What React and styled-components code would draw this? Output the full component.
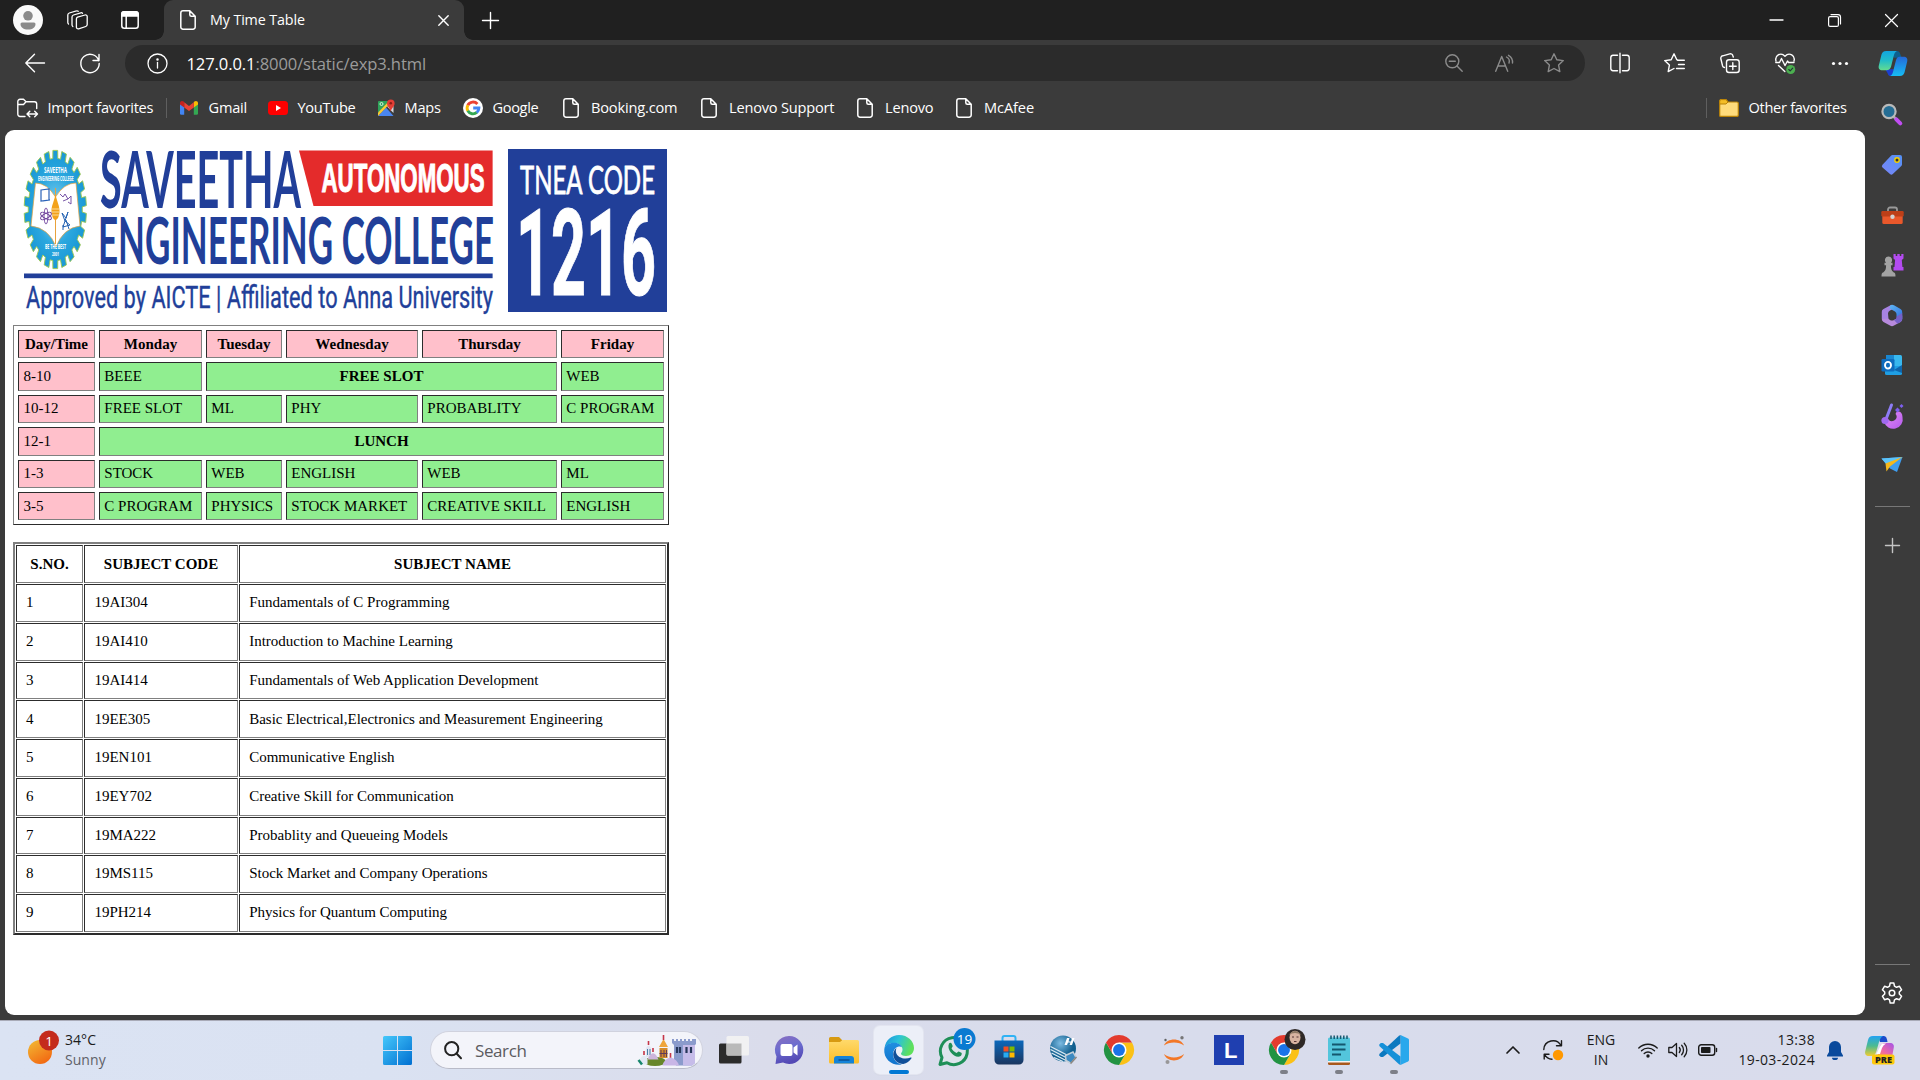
import React from "react";
import styled, { createGlobalStyle, css } from "styled-components";

const UI = `"Open Sans", "Noto Sans", sans-serif`;
const SERIF = `"Liberation Serif", "Times New Roman", serif`;

const GlobalStyle = createGlobalStyle`
  * { box-sizing: border-box; }
  html, body { margin: 0; padding: 0; overflow: hidden; }
`;

/* ---------- shell ---------- */
const Desktop = styled.div`
  width: 1920px;
  height: 1080px;
  display: flex;
  flex-direction: column;
  background: #3b3b3b;
  font-family: ${UI};
  color: #fff;
  overflow: hidden;
`;
const Slot = styled.div`
  flex: none;
  width: ${(p) => p.$w}px;
  height: ${(p) => (p.$h ? `${p.$h}px` : "100%")};
  margin-left: ${(p) => p.$ml || 0}px;
  display: flex;
  align-items: center;
  justify-content: center;
`;
const Svg = styled.svg`
  display: block;
  flex: none;
  overflow: visible;
`;
const Icon = ({ w = 20, h = 20, vb, children, c = "#fff", sw = 1.3 }) => (
  <Svg width={w} height={h} viewBox={vb || `0 0 ${w} ${h}`} fill="none" stroke={c} strokeWidth={sw} strokeLinecap="round" strokeLinejoin="round">
    {children}
  </Svg>
);
const Spacer = styled.div`
  flex: 1;
`;

/* ---------- tab strip ---------- */
const TabStrip = styled.div`
  height: 40px;
  flex: none;
  display: flex;
  background: #202020;
`;
const Tab = styled.div`
  position: relative;
  width: 300px;
  height: 40px;
  display: flex;
  align-items: center;
  padding-left: 16px;
  background: #3b3b3b;
  border-radius: 9px 9px 0 0;
  &::before,
  &::after {
    content: "";
    position: absolute;
    bottom: 0;
    width: 9px;
    height: 9px;
  }
  &::before {
    left: -9px;
    background: radial-gradient(circle at 0 0, transparent 8.5px, #3b3b3b 9px);
  }
  &::after {
    right: -9px;
    background: radial-gradient(circle at 100% 0, transparent 8.5px, #3b3b3b 9px);
  }
`;
const TabTitle = styled.div`
  width: 230px;
  padding-left: 14px;
  font-size: 14.3px;
  line-height: 20px;
  letter-spacing: -0.12px;
  white-space: nowrap;
`;

/* ---------- toolbar ---------- */
const Toolbar = styled.div`
  height: 46px;
  flex: none;
  display: flex;
  align-items: center;
  padding-left: 7px;
`;
const AddressBar = styled.div`
  width: 1460px;
  height: 36px;
  margin-left: 8px;
  padding: 0 6px 0 22px;
  display: flex;
  align-items: center;
  background: #2b2b2b;
  border-radius: 18px;
`;
const Url = styled.div`
  flex: 1;
  padding: 2px 0 0 18.5px;
  font-size: 16.6px;
  letter-spacing: -0.12px;
  line-height: 24px;
  color: #9b9b9b;
  white-space: nowrap;
  b {
    font-weight: 400;
    color: #fff;
  }
`;

/* ---------- favourites ---------- */
const Main = styled.div`
  flex: 1;
  display: flex;
  min-height: 0;
`;
const Left = styled.div`
  width: 1865px;
  display: flex;
  flex-direction: column;
`;
const FavBar = styled.div`
  height: 44px;
  flex: none;
  display: flex;
  align-items: center;
  padding-left: 17px;
`;
const Fav = styled.div`
  display: flex;
  align-items: center;
  width: ${(p) => p.$w}px;
`;
const FavLabel = styled.span`
  padding-left: ${(p) => p.$pl || 9.5}px;
  padding-bottom: 2px;
  font-size: 14.6px;
  line-height: 20px;
  letter-spacing: ${(p) => p.$ls || -0.22}px;
  white-space: nowrap;
`;
const VLine = styled.div`
  width: 1px;
  height: 20px;
  background: #5f5f5f;
`;

/* ---------- page ---------- */
const Page = styled.div`
  margin-left: 5px;
  height: 885px;
  padding: 10px 0 0 8px;
  background: #fff;
  border-radius: 9px;
  color: #000;
  font-family: ${SERIF};
  font-size: 15px;
`;
const bevel = (w) => css`
  border: ${w}px solid;
  border-color: #808080 #2c2c2c #2c2c2c #808080;
`;
const inset = css`
  border: 1px solid;
  border-color: #2c2c2c #808080 #808080 #2c2c2c;
`;
const Timetable = styled.table`
  ${bevel(1)}
  width: 656px;
  margin-top: 2px;
  padding: 4px;
  display: grid;
  grid-template-columns: 77px 103px 76px 132px 135px 103px;
  grid-template-rows: 28px 29px 28px 29px 28px 28px;
  gap: 4px;
`;
const Subjects = styled.table`
  ${bevel(2)}
  width: 656px;
  margin-top: 17px;
  padding: 1px;
  display: grid;
  grid-template-columns: 67px 154px 427px;
  grid-template-rows: 38px 38px 38px 37px 38px 38px 38px 37px 38px 38px;
  gap: 1px;
`;
const Contents = styled.tbody`
  display: contents;
`;
const Row = styled.tr`
  display: contents;
`;
const Cell = styled.td`
  ${inset}
  grid-column: span ${(p) => p.$span || 1};
  display: flex;
  align-items: center;
  justify-content: ${(p) => (p.$head ? "center" : "flex-start")};
  padding: ${(p) => (p.$low ? "1px" : "0")} ${(p) => p.$pad}px ${(p) => (p.$low ? "0" : "1px")};
  font-weight: ${(p) => (p.$head ? 700 : 400)};
  background: ${(p) => p.$bg || "transparent"};
  line-height: 17px;
  white-space: nowrap;
`;

/* ---------- sidebar ---------- */
const Sidebar = styled.div`
  width: 55px;
  display: flex;
  flex-direction: column;
  align-items: center;
  padding-top: 4px;
`;
const SideSlot = styled.div`
  width: 54px;
  height: ${(p) => p.$h}px;
  flex: none;
  align-self: flex-start;
  display: flex;
  align-items: center;
  justify-content: center;
`;
const HLine = styled.div`
  width: 35px;
  height: 1px;
  margin-top: ${(p) => p.$mt}px;
  background: #777;
`;

/* ---------- taskbar ---------- */
const Taskbar = styled.div`
  height: 60px;
  flex: none;
  display: flex;
  align-items: center;
  padding-bottom: 1px;
  border-top: 1px solid #a9abb8;
  background: linear-gradient(90deg, #dbe3f3 0%, #dae2f2 20%, #dadceb 40%, #d8dcec 60%, #d9dcec 100%);
  color: #1b1b1b;
`;
const Weather = styled.div`
  width: 383px;
  display: flex;
  align-items: center;
  padding: 0 0 1px 27.5px;
`;
const TwoLines = styled.div`
  font-size: 14px;
  line-height: 20px;
  letter-spacing: ${(p) => p.$ls || 0}px;
  text-align: ${(p) => p.$align || "left"};
  padding-left: ${(p) => p.$pl || 0}px;
  padding-bottom: ${(p) => p.$pb || 0}px;
  width: ${(p) => (p.$w ? `${p.$w}px` : "auto")};
  white-space: nowrap;
  span {
    display: block;
  }
  span + span {
    color: ${(p) => p.$second || "inherit"};
  }
`;
const SearchBox = styled.div`
  width: 273px;
  height: 38px;
  margin: 0 3px 0 18px;
  padding: 0 6px 0 13px;
  display: flex;
  align-items: center;
  background: #f3f4fa;
  border: 1px solid #d0d2de;
  border-bottom-color: #b9bbc8;
  border-radius: 19px;
`;
const SearchText = styled.div`
  flex: 1;
  padding-left: 13px;
  font-size: 17px;
  letter-spacing: -0.4px;
  color: #5b5b5f;
`;
const App48 = styled.div`
  position: relative;
  width: 49px;
  height: 48px;
  display: flex;
  align-items: center;
  justify-content: center;
  border-radius: 6px;
  background: ${(p) => (p.$active ? "#eceff8" : "transparent")};
  box-shadow: ${(p) => (p.$active ? "0 0 0 1px #e3e5f0, 0 1px 1px #c3c5d0" : "none")};
  &::after {
    content: "";
    display: ${(p) => (p.$run ? "block" : "none")};
    position: absolute;
    bottom: 0;
    width: ${(p) => (p.$active ? 20 : 8)}px;
    height: 4px;
    border-radius: 2px;
    background: ${(p) => (p.$active ? "#0078d4" : "#7d7f88")};
  }
`;

/* ---------- shared drawings ---------- */
const Doc = () => (
  <Icon w={16} h={20} sw={1.5}>
    <path d="M3 .8H9.8L15.2 6.2V17a2.2 2.2 0 0 1-2.2 2.2H3A2.2 2.2 0 0 1 .8 17V3A2.2 2.2 0 0 1 3 .8ZM9.8.8V4.7a1.5 1.5 0 0 0 1.5 1.5h3.9" />
  </Icon>
);
const ChromeMark = ({ s = 30 }) => (
  <Svg width={s} height={s} viewBox="0 0 48 48">
    <path d="M44.8 12A24 24 0 0 1 24 48L34.4 30 24 12Z" fill="#fbc116" />
    <path d="M3.2 12A24 24 0 0 0 24 48L34.4 30 13.6 30Z" fill="#229342" />
    <path d="M3.2 12 13.6 30 24 24V12H44.8A24 24 0 0 0 3.2 12Z" fill="#e33b2e" />
    <circle cx="24" cy="24" r="12" fill="#fff" />
    <circle cx="24" cy="24" r="9.5" fill="#1a73e8" />
  </Svg>
);
const GoogleMark = () => (
  <Svg width="20" height="20" viewBox="0 0 20 20">
    <circle cx="10" cy="10" r="10" fill="#fff" />
    <g fill="none" strokeWidth="2.9">
      <path d="M14.4 6A5.9 5.9 0 0 0 4.8 7.2" stroke="#ea4335" />
      <path d="M4.9 7.1a5.9 5.9 0 0 0 0 5.8" stroke="#fbbc05" />
      <path d="M4.8 12.8a5.9 5.9 0 0 0 9 1.6" stroke="#34a853" />
      <path d="M13.7 14.5A5.9 5.9 0 0 0 15.9 10H10.2" stroke="#4285f4" />
    </g>
  </Svg>
);
const CopilotMark = () => (
  <Svg width="30" height="27" viewBox="0 0 30 28">
    <defs>
      <linearGradient id="cpA" x1="0" y1="0" x2="0" y2="1">
        <stop offset="0" stopColor="#12a5e0" />
        <stop offset=".5" stopColor="#22bdc8" />
        <stop offset="1" stopColor="#63dc90" />
      </linearGradient>
      <linearGradient id="cpB" x1="0" y1="0" x2="0" y2="1">
        <stop offset="0" stopColor="#2568d8" />
        <stop offset="1" stopColor="#16bdf5" />
      </linearGradient>
    </defs>
    <path d="M14 1h5c2.500 0 3 1.600 3.600 3.500L24 8h-8Z" fill="#0d5f8e" />
    <path d="M7 20h9l-2 7h-1c-2 0-3-1-3.600-3Z" fill="#1b3fd0" />
    <path d="M8 1h11c-2 1-2.700 3-3.300 5.500L13 17c-.7 2.500-2 4-5 4H4c-3 0-4.500-2-3.700-5L3 5c.7-2.500 2-4 5-4Z" fill="url(#cpA)" />
    <path d="M22 7h4c3 0 4.500 2 3.700 5L27 23c-.7 2.500-2 4-5 4H12c2-1 2.700-3 3.300-5.500L18 11c.7-2.500 1.500-4 4-4Z" fill="url(#cpB)" />
  </Svg>
);

/* ---------- college banner ---------- */
const gearPath = (() => {
  const n = 22;
  const pts = [];
  for (let i = 0; i < n; i++) {
    [
      [-0.32, 27],
      [-0.27, 31.2],
      [0.27, 31.2],
      [0.32, 27],
    ].forEach(([o, r]) => {
      const a = ((i + o) * 2 * Math.PI) / n - Math.PI / 2;
      pts.push(`${(42.3 + r * Math.cos(a)).toFixed(1)} ${(69.5 + r * 1.9 * Math.sin(a)).toFixed(1)}`);
    });
  }
  return `M${pts.join("L")}Z`;
})();

const Banner = () => (
  <Svg width="656" height="183" viewBox="0 0 656 183">
    <defs>
      <radialGradient id="gearFill">
        <stop offset="0" stopColor="#8fd4f1" />
        <stop offset=".6" stopColor="#2ba7de" />
        <stop offset="1" stopColor="#1a98d6" />
      </radialGradient>
    </defs>
    <path d={gearPath} fill="url(#gearFill)" stroke="#9cc74f" strokeWidth=".9" />
    <path d="M22.500 43Q34 43 42.500 57Q51 43 63 43L67 86Q50 88 43 107Q36 88 18 86Z" fill="#fff" stroke="#e9a23b" strokeWidth=".7" />
    <path d="M42.500 48V106" stroke="#e9a23b" strokeWidth="1" />
    <path d="M42.500 55C45 64 46.500 66 46.500 71s-2 9-4 9-4-4-4-9 1.500-7 4-16Z" fill="#f3a21c" />
    <path d="M39 69h7M39 72h7M39 75h7" stroke="#fff3d0" strokeWidth=".7" />
    <path d="M28 50l8-1v11l-8 1ZM30 61l7-1" fill="none" stroke="#2a62b8" strokeWidth="1.200" />
    <g fill="none" stroke="#6a3a98" strokeWidth=".9">
      <ellipse cx="33" cy="76" rx="2" ry="8" />
      <ellipse cx="33" cy="76" rx="2.500" ry="6" transform="rotate(60 33 76)" />
      <ellipse cx="33" cy="76" rx="2.500" ry="6" transform="rotate(-60 33 76)" />
    </g>
    <path d="M47 54l3 3 2-3 3 5 3-3v8l-3-2M50 61l5-2" stroke="#69429d" strokeWidth=".9" fill="none" />
    <path d="M49 73l4 5 2-6-3 9 5 4-7 2 2-6ZM50 85v5M53 80l3 9" stroke="#2261b1" strokeWidth="1" fill="none" />
    <g fill="#fff" fontFamily="Open Sans, sans-serif" fontWeight="700">
      <text x="31" y="33" fontSize="8.500" textLength="23" lengthAdjust="spacingAndGlyphs">SAVEETHA</text>
      <text x="25" y="41" fontSize="6.800" textLength="35.500" lengthAdjust="spacingAndGlyphs">ENGINEERING COLLEGE</text>
      <text x="32" y="109" fontSize="6.500" textLength="21" lengthAdjust="spacingAndGlyphs">BE THE BEST</text>
      <text x="39" y="116" fontSize="6" textLength="7" lengthAdjust="spacingAndGlyphs">2001</text>
    </g>
    <g fill="#213f99" fontFamily="Lato, sans-serif">
      <text x="87" y="68" fontSize="79" fontWeight="700" textLength="201" lengthAdjust="spacingAndGlyphs">SAVEETHA</text>
      <text x="85" y="124" fontSize="64.500" fontWeight="700" textLength="396" lengthAdjust="spacingAndGlyphs">ENGINEERING COLLEGE</text>
    </g>
    <path d="M286 10.500H479.600V66H300.500Z" fill="#e42b2b" />
    <text x="308.500" y="52" fill="#fff" stroke="#fff" strokeWidth="1.100" fontFamily="Liberation Sans, Arial, sans-serif" fontWeight="700" fontSize="40" textLength="163" lengthAdjust="spacingAndGlyphs">AUTONOMOUS</text>
    <rect x="11" y="133.500" width="468.600" height="4.700" fill="#213f99" />
    <text x="13" y="168" fill="#213f99" stroke="#213f99" strokeWidth=".4" fontFamily="Roboto, sans-serif" fontSize="31" textLength="467" lengthAdjust="spacingAndGlyphs">Approved by AICTE | Affiliated to Anna University</text>
    <rect x="495" y="9" width="159" height="163" fill="#213f99" />
    <g fill="#fff">
      <text x="507" y="53.500" fontFamily="Lato, sans-serif" fontWeight="400" stroke="#fff" strokeWidth=".8" fontSize="38.500" textLength="135" lengthAdjust="spacingAndGlyphs">TNEA CODE</text>
      <text x="503" y="154.500" fontFamily="Roboto, sans-serif" fontWeight="700" fontSize="120" stroke="#fff" strokeWidth="1" textLength="140" lengthAdjust="spacingAndGlyphs">1216</text>
    </g>
  </Svg>
);

/* ---------- data ---------- */
const PINK = "#ffc0cb";
const GREEN = "#90ee90";
const days = ["Day/Time", "Monday", "Tuesday", "Wednesday", "Thursday", "Friday"];
const slots = [
  ["8-10", ["BEEE"], ["FREE SLOT", 3], ["WEB"]],
  ["10-12", ["FREE SLOT"], ["ML"], ["PHY"], ["PROBABLITY"], ["C PROGRAM"]],
  ["12-1", ["LUNCH", 5]],
  ["1-3", ["STOCK"], ["WEB"], ["ENGLISH"], ["WEB"], ["ML"]],
  ["3-5", ["C PROGRAM"], ["PHYSICS"], ["STOCK MARKET"], ["CREATIVE SKILL"], ["ENGLISH"]],
];
const subjects = [
  ["19AI304", "Fundamentals of C Programming"],
  ["19AI410", "Introduction to Machine Learning"],
  ["19AI414", "Fundamentals of Web Application Development"],
  ["19EE305", "Basic Electrical,Electronics and Measurement Engineering"],
  ["19EN101", "Communicative English"],
  ["19EY702", "Creative Skill for Communication"],
  ["19MA222", "Probablity and Queueing Models"],
  ["19MS115", "Stock Market and Company Operations"],
  ["19PH214", "Physics for Quantum Computing"],
];

const SideIcons = [
  <Svg key="s" width="22" height="22" viewBox="0 0 22 22">
    <path d="M12 12l3.500 3.500" stroke="#aaa" strokeWidth="2.500" />
    <path d="M15.300 15.300l4 4" stroke="#c04df2" strokeWidth="4" strokeLinecap="round" />
    <circle cx="8" cy="7.500" r="6.600" fill="#256d94" stroke="#b9b9b9" strokeWidth="2.200" />
  </Svg>,
  <Svg key="t" width="22" height="22" viewBox="0 0 22 22">
    <defs>
      <linearGradient id="tag" x1="1" y1="0" x2="0" y2="1">
        <stop offset="0" stopColor="#5391f5" />
        <stop offset="1" stopColor="#7a86f8" />
      </linearGradient>
    </defs>
    <path d="M11.500 1H19a2 2 0 0 1 2 2v7.500a2 2 0 0 1-.7 1.500l-8.500 8a2 2 0 0 1-2.800 0L1.500 13.500a2 2 0 0 1 0-2.800L10 1.700A2 2 0 0 1 11.500 1Z" fill="url(#tag)" />
    <circle cx="16" cy="6" r="2.200" fill="#333" stroke="#f5d000" strokeWidth="1.400" />
  </Svg>,
  <Svg key="b" width="23" height="19" viewBox="0 0 23 19">
    <path d="M7 6V3.500A2 2 0 0 1 9 1.500h5a2 2 0 0 1 2 2V6" fill="none" stroke="#999" strokeWidth="1.800" />
    <rect x="1.300" y="9" width="20.400" height="9" rx="1.500" fill="#e9582b" />
    <rect x=".3" y="5" width="22.400" height="5.500" rx="1.200" fill="#bd3f18" />
    <circle cx="11.500" cy="10.800" r="2.200" fill="#d3d3d3" />
  </Svg>,
  <Svg key="c" width="23" height="24" viewBox="0 0 23 24">
    <path d="M12.500 1h2.200v2h1.600V1h2.400v2h1.600V1h2.200v4.500l-1.700 1.500.6 7H22.500v3.500H12.500V14h1l.6-7-1.600-1.500Z" fill="#b34bf0" />
    <path d="M7.500 3.500a3.600 3.600 0 0 1 2.400 6.300h1.600v2.500H9.900c0 4 .8 5.500 2.600 7 1.700.6 2 1.500 2 4.200H.5c0-2.700.3-3.600 2-4.200 1.800-1.500 2.600-3 2.600-7H3.500V9.800H5.100A3.600 3.600 0 0 1 7.500 3.500Z" fill="#a3a3a3" />
  </Svg>,
  <Svg key="m" width="22" height="23" viewBox="0 0 22 23">
    <defs>
      <linearGradient id="mA" x1="0" y1="0" x2="1" y2="1">
        <stop offset="0" stopColor="#5fb6f2" />
        <stop offset="1" stopColor="#2f6fe0" />
      </linearGradient>
    </defs>
    <path d="M10.500.8 2.500 5A3 3 0 0 0 .8 8v7L3 17.500 7.500 15 7 9.500Q7 7.500 9 6.500L11 5.500Z" fill="#a783e3" />
    <path d="M9.500 1.200Q11 .3 13 1.200l6.500 3.700Q21.200 6 21.200 8v7.500L15.500 12.500V10Q15.500 8.500 14 7.500L8.500 4.500Z" fill="url(#mA)" />
    <path d="M.8 15 7 14.500 9 16Q11 17 13 16L21.200 11.500V15q0 2-1.700 3l-6.500 3.600q-2 1.200-4 0L2.500 18Q.8 17 .8 15Z" fill="#b78add" />
    <path d="M15.500 12.500 21.200 9v6q0 2-1.700 3l-3 1.700L13 16l2-1Z" fill="#7660c9" />
  </Svg>,
  <Svg key="o" width="22" height="22" viewBox="0 0 22 22">
    <rect x="5" y="1" width="16" height="12" rx="1.500" fill="#38b8ee" />
    <rect x="5" y="1" width="8" height="8" fill="#1a87d0" />
    <path d="M4 12h17v7.500a1.500 1.500 0 0 1-1.500 1.500H5.500A1.500 1.500 0 0 1 4 19.500Z" fill="#1f9fe4" />
    <path d="M13 16l8-5v8Z" fill="#0f65ac" />
    <rect x=".5" y="5" width="13" height="12.500" rx="1.300" fill="#0f6cbd" />
    <ellipse cx="7" cy="11.200" rx="3" ry="3.300" fill="none" stroke="#fff" strokeWidth="1.900" />
  </Svg>,
  <Svg key="d" width="23" height="25" viewBox="0 0 23 25">
    <defs>
      <linearGradient id="dz" x1="0" y1="0" x2="1" y2="1">
        <stop offset="0" stopColor="#e58cf8" />
        <stop offset="1" stopColor="#b45bec" />
      </linearGradient>
    </defs>
    <path d="M15.500 9c3-1.500 6 .5 6 5A9.500 9.500 0 0 1 3 18.500L6.500 15c1 3 4 4 6.700 2.500s3.300-4.500 1.300-6.500Z" fill="url(#dz)" />
    <path d="M10.500 2 5.500 15" stroke="#8d7cf6" strokeWidth="3" strokeLinecap="round" />
    <circle cx="4" cy="17.500" r="3.600" fill="#a069ef" />
    <path d="M16.500 4.500 19 7l-2.500 2.500L14 7ZM20.500 1l2 2-2 2-2-2Z" fill="#7e5ff0" />
  </Svg>,
  <Svg key="p" width="22" height="18" viewBox="0 0 22 18">
    <path d="M.5 2.500 21.500 1 16 16 9 12.500Z" fill="#3e9df0" />
    <path d="M.5 2.500 21.500 1 6 9Z" fill="#5cc4fa" />
    <path d="M4.500 7.500 21.500 1 9 10.500 5.500 15.500Z" fill="#f5b81c" />
  </Svg>,
];

const TaskApps = [
  { icon: (
    <Svg width="30" height="30" viewBox="0 0 30 30">
      <rect x="0" y="8.500" width="22.500" height="20" rx="1.500" fill="#2b2b2b" />
      <rect x="7.500" y="1" width="22.500" height="19.500" rx="1.500" fill="#f1f1f2" />
      <path d="M7.500 8.500H22.500V20.500H9A1.500 1.500 0 0 1 7.500 19Z" fill="#b9b9b9" />
    </Svg>) },
  { icon: (
    <Svg width="30" height="30" viewBox="0 0 30 30">
      <defs><linearGradient id="ch" x1="0" y1="0" x2=".3" y2="1"><stop offset="0" stopColor="#8a6fc0" /><stop offset=".5" stopColor="#6b6ccf" /><stop offset="1" stopColor="#5449b5" /></linearGradient></defs>
      <path d="M15 1A14 14 0 1 1 9 27.500L1.500 29 2.500 21.500A14 14 0 0 1 15 1Z" fill="url(#ch)" />
      <rect x="6.500" y="9" width="12" height="12" rx="2" fill="#fff" />
      <path d="M19.500 12.500 23.500 9.500V20.500L19.500 17.500Z" fill="#fff" />
    </Svg>) },
  { icon: (
    <Svg width="30" height="30" viewBox="0 0 30 30">
      <defs><linearGradient id="fo" x1="0" y1="0" x2="0" y2="1"><stop offset="0" stopColor="#ffd96a" /><stop offset="1" stopColor="#fbbd28" /></linearGradient></defs>
      <path d="M0 3.500A1.500 1.500 0 0 1 1.500 2H10l3 3v5H0Z" fill="#d79a12" />
      <path d="M0 7H11l2.500-2H28.500A1.500 1.500 0 0 1 30 6.500V27A1.500 1.500 0 0 1 28.500 28.500H1.500A1.500 1.500 0 0 1 0 27Z" fill="url(#fo)" />
      <path d="M5 28.500V24A3 3 0 0 1 8 21H22A3 3 0 0 1 25 24V28.500Z" fill="#1483d8" />
      <path d="M9.500 25H20.500" stroke="#0b4f90" strokeWidth="1.500" />
    </Svg>) },
  { active: true, run: true, icon: (
    <Svg width="30" height="30" viewBox="0 0 30 30">
      <defs>
        <linearGradient id="eA" x1="0" y1="0" x2="1" y2=".3"><stop offset="0" stopColor="#1b8fdd" /><stop offset=".5" stopColor="#2bc3d8" /><stop offset="1" stopColor="#5fe05c" /></linearGradient>
        <linearGradient id="eB" x1="0" y1="0" x2="0" y2="1"><stop offset="0" stopColor="#1f8ee0" /><stop offset="1" stopColor="#1273cc" /></linearGradient>
      </defs>
      <path d="M.5 13C1.500 5 8 0 15 0c9 0 15 6.500 15 13 0 5-3.500 8-8 8-3.500 0-5-1.300-5-2.300 0-.8 1.500-1.500 1.500-4.200C18.500 11 15 8 10.500 8 6 8 2 10 .5 13Z" fill="url(#eA)" />
      <path d="M.3 14C1 10 5.500 7.800 10 7.800c4 0 7 2 8 4.500-1-1-2.500-1-4-.5-3 1-5 4-5 7.500 0 5 4 9.500 9 10.200C9 31.500-.8 24.500.3 14Z" fill="url(#eB)" />
      <path d="M12.500 13c-2 1.500-3.300 4-3.300 6.500 0 5 4.500 9.500 10 9.500 3.500-.8 6.500-3 8.300-5.800.3-.7-.2-1-.8-.7-6 2.700-13.500 0-14.700-5-.3-1.700 0-3.200.5-4.500Z" fill="#104f99" />
    </Svg>) },
  { icon: (
    <Svg width="38" height="38" viewBox="0 0 38 38">
      <path d="M5 33.500 7 26.500A13.500 13.500 0 1 1 12 31.700Z" fill="#dde4ec" stroke="#1e8f57" strokeWidth="3" strokeLinejoin="round" />
      <path d="M14 12.500c1-1.200 2.300-.9 2.700.2l1 2.300c.2.700-1.200 2-1.200 2.300 1 2.200 2.800 3.700 5 4.700.5 0 1.500-1.600 2.200-1.500l2.700 1.300c.7.500.3 2.500-.7 3.300C20.500 28.500 11 19 14 12.500Z" fill="#1e8f57" />
      <circle cx="29.500" cy="8" r="11" fill="#0a7ad1" />
      <text x="29.500" y="12.800" fill="#fff" fontSize="13.500" textAnchor="middle" fontFamily="Open Sans, sans-serif">19</text>
    </Svg>) },
  { icon: (
    <Svg width="30" height="30" viewBox="0 0 30 30">
      <defs><linearGradient id="st" x1="0" y1="0" x2="0" y2="1"><stop offset="0" stopColor="#0b68bb" /><stop offset="1" stopColor="#1b365f" /></linearGradient></defs>
      <path d="M8.500 6V3A2 2 0 0 1 10.500 1H19.500A2 2 0 0 1 21.500 3V6" fill="none" stroke="#2fb2f4" strokeWidth="2" />
      <path d="M.5 5.500H29.500V25A4.500 4.500 0 0 1 25 29.500H5A4.500 4.500 0 0 1 .5 25Z" fill="url(#st)" />
      <path d="M9.500 11.500h5V16.500H9.500Z" fill="#f25022" /><path d="M15.500 11.500H20.500V16.500H15.500Z" fill="#7fba00" /><path d="M9.500 17.500h5v5H9.500Z" fill="#29aaf0" /><path d="M15.500 17.500H20.500v5H15.500Z" fill="#ffb900" />
    </Svg>) },
  { icon: (
    <Svg width="30" height="30" viewBox="0 0 30 30">
      <defs><radialGradient id="nb" cx=".4" cy=".3"><stop offset="0" stopColor="#7cbbe2" /><stop offset="1" stopColor="#12608f" /></radialGradient></defs>
      <circle cx="14" cy="13.500" r="13" fill="url(#nb)" />
      <path d="M1.500 11.500 19 20.500M1.500 14.500 18 23M2.500 18 18 26M5 22.500l9 4" stroke="#dcebf4" strokeWidth="1.300" />
      <path d="M15.500 10 18 3H20.500L19.500 6.500H22L23 3H25.500L23 10H20.500L21.500 7.500H19L18 10Z" fill="#fff" />
      <path d="M16.500 20.500 24 17l3 5.500-5 6-5-3Z" fill="#3c89c0" stroke="#c3cfd8" strokeWidth="1.500" />
      <path d="M21.500 28.500 27.500 22" stroke="#8d8680" strokeWidth="1.500" />
    </Svg>) },
  { icon: <ChromeMark /> },
  { icon: (
    <Svg width="24" height="30" viewBox="0 0 24 30">
      <path d="M2 10.500C5 2.500 19 2.500 22 10.500 17 6.500 7 6.500 2 10.500ZM2 19C5 27.500 19 27.500 22 19 17 23.500 7 23.500 2 19Z" fill="#f37726" />
      <circle cx="20" cy="2.800" r="1.700" fill="#767677" /><circle cx="3.500" cy="5" r="1.200" fill="#616262" /><circle cx="5.500" cy="27" r="2" fill="#989798" />
    </Svg>) },
  { icon: (
    <Svg width="30" height="30" viewBox="0 0 30 30">
      <rect width="30" height="30" fill="#1f3fb0" />
      <text x="10" y="23" fontSize="22" fontWeight="700" fill="#fff" fontFamily="Liberation Sans, sans-serif">L</text>
    </Svg>) },
  { run: true, icon: (
    <Svg width="30" height="30" viewBox="0 0 30 30">
      <ChromeMark />
      <circle cx="26" cy="4.500" r="10.500" fill="#2e2826" />
      <ellipse cx="26" cy="2.500" rx="5.500" ry="6.800" fill="#d8b3a0" />
      <path d="M19.500 0Q26-8 32.500 0 26-4 19.500 0Z" fill="#8d7863" />
      <path d="M23 2h2M27.500 2h2M25 6.500h2.500" stroke="#533" strokeWidth="1" />
    </Svg>) },
  { run: true, icon: (
    <Svg width="24" height="30" viewBox="0 0 24 30">
      <path d="M1 26H23V28.500A1.500 1.500 0 0 1 21.500 30H2.500A1.500 1.500 0 0 1 1 28.500Z" fill="#a8581c" />
      <path d="M1 26H23V27.500H1Z" fill="#f4f4f4" />
      <path d="M1 4A1.500 1.500 0 0 1 2.500 2.500H21.500A1.500 1.500 0 0 1 23 4V26H1Z" fill="#53c5dc" />
      <path d="M4 .5V4M7.200 .5V4M10.400 .5V4M13.600 .5V4M16.800 .5V4M20 .5V4" stroke="#17586f" strokeWidth="1.500" />
      <path d="M5 9.500H18.500M5 14.500H18.500M5 19.500H14" stroke="#14576e" strokeWidth="2" />
    </Svg>) },
  { run: true, icon: (
    <Svg width="30" height="30" viewBox="0 0 30 30">
      <path d="M21.500 0 29 3.500A1.800 1.800 0 0 1 30 5V25A1.800 1.800 0 0 1 29 26.500L21.500 30Z" fill="#29a8ec" />
      <path d="M21.500 0V8.500L4 22 1.800 22 .3 20.500V19L20 .8Z" fill="#0b78bf" />
      <path d="M21.500 30V21.500L4 8 1.800 8 .3 9.500V11L20 29.200Z" fill="#1590d8" />
    </Svg>) },
];

const Castle = () => (
  <Svg width="58" height="31" viewBox="0 0 58 31">
    <ellipse cx="17" cy="26.500" rx="11" ry="4.500" fill="#67862a" />
    <path d="M21.500 13h8v10h-8Z" fill="#d58a28" /><path d="M21 12 25.500 4 30 12Z" fill="#efa53a" />
    <path d="M23 15v7M26 15v7M28.500 15v7M21.500 18.500h8" stroke="#603b58" strokeWidth="1" />
    <path d="M25.500 0V5M10.500 6V10M15 13V17M6 16V20M32.500 18V23" stroke="#c53548" strokeWidth="1.600" />
    <path d="M8 13Q10.500 8 13 13V22H8Z" fill="#e2e4f2" /><path d="M9.500 14v6M12 14v6" stroke="#477fa8" strokeWidth="1" />
    <path d="M9.500 24.500Q15 12 20.500 24.500Z" fill="#cdb5dc" />
    <path d="M2 24Q6 17 9.500 24V29.500H4Z" fill="#e1e9f4" /><path d="M.5 25 4 29.500" stroke="#17866c" strokeWidth="2.500" />
    <path d="M34 4h2v2h2V4h2v2h2V4h2v2h2V4h2v2h2V4h2v2h2V4h4V9l-1 1V28L54 30.500H38L36 26V10L34 8Z" fill="#8b9bcc" />
    <path d="M45 10H57V28L54 30.500H45Z" fill="#c6bce9" />
    <path d="M39 12v6M42 12v6M48.500 12v6M53 12v6" stroke="#263659" strokeWidth="2.200" />
    <path d="M24.500 30.500Q26 24 32.500 22.500 39 24 41 30.500Z" fill="#c9b6e6" />
  </Svg>
);

const TrayCopilot = () => (
  <Svg width="30" height="30" viewBox="0 0 30 30">
    <defs>
      <linearGradient id="tcA" x1="0" y1="0" x2="0" y2="1"><stop offset="0" stopColor="#22a2f2" /><stop offset=".5" stopColor="#4dbb8f" /><stop offset="1" stopColor="#f0cc32" /></linearGradient>
      <linearGradient id="tcB" x1="1" y1="0" x2="0" y2="1"><stop offset="0" stopColor="#a353e8" /><stop offset=".6" stopColor="#ef6aa4" /><stop offset="1" stopColor="#ff8b56" /></linearGradient>
    </defs>
    <path d="M13 1h6c2 0 3 2 3.500 6H15Z" fill="#1a4ccc" />
    <path d="M8 1h10c-2 1-3 3-4 6l-2.500 9c-1 3-2 5-5 5H4c-3 0-4.500-2-3.700-5L3 5c.7-2.500 2-4 5-4Z" fill="url(#tcA)" />
    <path d="M20 8h5c3 0 4.500 2 3.700 5L27 22H12l3-10c.7-2.500 2-4 5-4Z" fill="url(#tcB)" />
    <path d="M15.500 10.500 17 8.500H21Q18 10 17 13L15 19H11.500Z" fill="#fff" />
    <rect x="7" y="19.500" width="22.500" height="10" rx="2" fill="#fdc90a" />
    <text x="10" y="27.500" fontSize="8.200" fontWeight="800" fill="#222" textLength="17" lengthAdjust="spacingAndGlyphs" fontFamily="Open Sans, sans-serif">PRE</text>
  </Svg>
);

export default function App() {
  return (
    <Desktop>
      <GlobalStyle />
      <TabStrip>
        <Slot $w={56}>
          <Svg width="30" height="30" viewBox="0 0 30 30">
            <circle cx="15" cy="15" r="15" fill="#fafafa" />
            <circle cx="15" cy="10.800" r="4.800" fill="#8b8b8b" />
            <path d="M9 17.500h12a1.500 1.500 0 0 1 1.500 1.500c0 3.500-3 5.500-7.500 5.500S7.500 22.500 7.500 19A1.500 1.500 0 0 1 9 17.500Z" fill="#8b8b8b" />
          </Svg>
        </Slot>
        <Slot $w={43}>
          <Icon w={21} h={20} sw={1.3}>
            <path d="M10.500 7.200 18 5a1.700 1.700 0 0 1 2.200 1.600v8a2 2 0 0 1-1.400 1.900l-7.200 2.300a1.700 1.700 0 0 1-2.200-1.600V9a2 2 0 0 1 1.100-1.800Z" />
            <path d="M5.800 16.500A2 2 0 0 1 5 15V7a2.200 2.200 0 0 1 1.500-2l7.300-2.200a1.700 1.700 0 0 1 1.700.4M1.500 14A2 2 0 0 1 .8 12.500V5a2.200 2.200 0 0 1 1.500-2L9.500.9a1.700 1.700 0 0 1 1.700.4" />
          </Icon>
        </Slot>
        <Slot $w={62}>
          <Icon w={18} h={18} sw={1.5}>
            <rect x=".8" y=".8" width="16.400" height="16.400" rx="2.500" />
            <path d="M.8 3.200A2.400 2.400 0 0 1 3.200.8H14.800A2.400 2.400 0 0 1 17.200 3.200V5H.8Z" fill="#fff" />
            <path d="M5.200 5V17" />
          </Icon>
        </Slot>
        <Slot $w={3} />
        <Tab>
          <Doc />
          <TabTitle>My Time Table</TabTitle>
          <Slot $w={42}>
            <Icon w={11} h={11} sw={1.4}><path d="M.8 .8 10.200 10.200M10.200.8.8 10.200" /></Icon>
          </Slot>
        </Tab>
        <Slot $w={52}>
          <Icon w={17} h={17} sw={1.4}><path d="M8.500 .5V16.500M.5 8.500H16.500" /></Icon>
        </Slot>
        <Spacer />
        <Slot $w={57}><Icon w={13} h={13}><path d="M0 6H13" /></Icon></Slot>
        <Slot $w={58}>
          <Icon w={13} h={13} sw={1.2}>
            <rect x=".6" y="2.600" width="9.800" height="9.800" rx="1.500" />
            <path d="M3 .6H10A2.500 2.500 0 0 1 12.500 3.100V10" />
          </Icon>
        </Slot>
        <Slot $w={57}><Icon w={13} h={13} sw={1.2}><path d="M.5 .5 12.500 12.500M12.500.5.5 12.500" /></Icon></Slot>
      </TabStrip>

      <Toolbar>
        <Slot $w={55}><Icon sw={1.4}><path d="M19.500 10H.8M9.500 1.200.8 10 9.500 18.800" /></Icon></Slot>
        <Slot $w={55}><Icon sw={1.4}><path d="M18.800 7.800A9.200 9.200 0 1 0 19.200 10.500M19 1.500V7.500H13" /></Icon></Slot>
        <AddressBar>
          <Icon w={21} h={21} sw={1.3}><circle cx="10.500" cy="10.500" r="9.500" /><path d="M10.500 9.500V15" /><circle cx="10.500" cy="6.500" r=".6" fill="#fff" /></Icon>
          <Url><b>127.0.0.1</b>:8000/static/exp3.html</Url>
          <Slot $w={50}><Icon w={18} h={18} c="#8b8b8b" sw={1.4}><circle cx="7.300" cy="7.300" r="6.500" /><path d="M4.300 7.300H10.300M12 12 17.200 17.200" /></Icon></Slot>
          <Slot $w={50}><Icon w={19} h={18} c="#8b8b8b" sw={1.4}><path d="M.7 17.300 6.700 2.500 12.700 17.300M2.800 12H10.600M11.500 3a5 5 0 0 1 2.500 6M13.500 1.300a8 8 0 0 1 4 7.700" /></Icon></Slot>
          <Slot $w={50}><Icon c="#8b8b8b" sw={1.4}><path d="M10 .8 12.800 6.700 19.300 7.600 14.600 12.100 15.800 18.600 10 15.500 4.200 18.600 5.400 12.100.7 7.600 7.200 6.700Z" /></Icon></Slot>
        </AddressBar>
        <Slot $w={55} $ml={7}><Icon w={20} h={20} sw={1.4}><path d="M7.500 2.300H3A2.300 2.300 0 0 0 .8 4.500V15.500A2.300 2.300 0 0 0 3 17.700H7.500M12.500 2.300H17A2.300 2.300 0 0 1 19.200 4.500V15.500A2.300 2.300 0 0 1 17 17.700H12.500M10 .3V19.700" /></Icon></Slot>
        <Slot $w={55}><Icon w={21} h={20} sw={1.4}><path d="M14 7.200 12.800 6.700 10 .8 7.200 6.700.7 7.600 5.400 12.100 4.200 18.600 10 15.500M13.500 7.200H20.300M14.500 11.500H20.300M12.500 15.500H20.300" /></Icon></Slot>
        <Slot $w={55}><Icon w={20} h={20} sw={1.4}><rect x="6.500" y="6.800" width="12.700" height="12.700" rx="2.500" /><path d="M12.800 9.800V16.500M9.500 13.200H16.200M4.500 14.500A2.500 2.500 0 0 1 2.500 12.700L.9 6A2.500 2.500 0 0 1 2.700 2.800L9.700.8A2.500 2.500 0 0 1 12.800 2.500L13.300 4" /></Icon></Slot>
        <Slot $w={55}>
          <Icon w={20} h={20} sw={1.4}>
            <path d="M1 8C-.5 3 5.500-1.500 10 3.200 14.500-1.500 20.500 3 19 8M.8 9.500H4.500L6.500 5.500 10 12.500 12.500 8 13.500 9.500H19M3.500 12.500 9.800 18.500" />
            <circle cx="15.700" cy="16.500" r="4.500" fill="#4caf50" stroke="none" />
            <path d="M13.800 16.500 15.200 17.900 17.700 15.200" stroke="#233" strokeWidth="1.100" />
          </Icon>
        </Slot>
        <Slot $w={55}><Icon w={18} h={6}><g fill="#fff" stroke="none"><circle cx="2.500" cy="3.500" r="1.600" /><circle cx="9" cy="3.500" r="1.600" /><circle cx="15.500" cy="3.500" r="1.600" /></g></Icon></Slot>
        <Slot $w={52}><CopilotMark /></Slot>
      </Toolbar>

      <Main>
        <Left>
          <FavBar>
            <Fav $w={149}>
              <Icon w={21} h={20} sw={1.4}><path d="M8 18.500H3A2.200 2.200 0 0 1 .8 16.300V3.500A2.200 2.200 0 0 1 3 1.300H6.500L9 3.800H17.500A2.200 2.200 0 0 1 19.700 6V10.500M.8 6.500H6.500L9 3.800M10.500 16H20M12.800 13.300 10 16 12.800 18.700M17.700 13.300 20.500 16 17.700 18.700" /></Icon>
              <FavLabel>Import favorites</FavLabel>
            </Fav>
            <VLine />
            <Slot $w={13} />
            <Fav $w={88}>
              <Svg width="18" height="14" viewBox="0 0 18 14">
                <path d="M0 2.500V12.500A1.300 1.300 0 0 0 1.300 13.800H4.200V5.500Z" fill="#4285f4" />
                <path d="M18 2.500V12.500A1.300 1.300 0 0 1 16.700 13.800H13.800V5.500Z" fill="#34a853" />
                <path d="M13.800 1.500V6.500L18 3.500V2C18 0 15.700-.6 14.300.5Z" fill="#fbbc04" />
                <path d="M4.200 6.500V1.300L9 5 13.800 1.300V6.500L9 10Z" fill="#ea4335" />
                <path d="M0 2V3.500L4.200 6.500V1.300L3.700.6C2.300-.6 0 0 0 2Z" fill="#c5221f" />
              </Svg>
              <FavLabel $pl={10.5}>Gmail</FavLabel>
            </Fav>
            <Fav $w={109}>
              <Svg width="20" height="14" viewBox="0 0 20 14"><rect width="20" height="14" rx="3.500" fill="#f00" /><path d="M8 4 13 7 8 10Z" fill="#fff" /></Svg>
              <FavLabel $ls={-0.3}>YouTube</FavLabel>
            </Fav>
            <Fav $w={86}>
              <Svg width="18" height="18" viewBox="0 0 18 18">
                <path d="M1.500 2H12L1 14V2.500Z" fill="#2fa35a" />
                <path d="M1 17 9 8.500 16.500 17Z" fill="#4a86f0" />
                <path d="M10 7.500 16.500 14V5Z" fill="#d6dade" />
                <path d="M1 13.500 12 2 13.500 4 1 17Z" fill="#f9cb32" />
                <circle cx="4.500" cy="5" r="1.500" fill="none" stroke="#d9f2e0" />
                <path d="M13.700 12.500C13 9 10 7.500 10 4.200a3.800 3.800 0 0 1 7.600 0C17.600 7.500 14.500 9 13.700 12.500Z" fill="#e33e35" />
                <circle cx="13.800" cy="4.200" r="1.300" fill="#8c1d18" />
              </Svg>
              <FavLabel>Maps</FavLabel>
            </Fav>
            <Fav $w={100}><GoogleMark /><FavLabel $ls={-0.35}>Google</FavLabel></Fav>
            <Fav $w={138}><Doc /><FavLabel $pl={12} $ls={-0.17}>Booking.com</FavLabel></Fav>
            <Fav $w={156}><Doc /><FavLabel $pl={12} $ls={-0.2}>Lenovo Support</FavLabel></Fav>
            <Fav $w={99}><Doc /><FavLabel $pl={12} $ls={-0.2}>Lenovo</FavLabel></Fav>
            <Fav $w={100}><Doc /><FavLabel $pl={12} $ls={-0.1}>McAfee</FavLabel></Fav>
            <Spacer />
            <VLine />
            <Slot $w={12} />
            <Fav $w={146}>
              <Svg width="20" height="18" viewBox="0 0 20 18">
                <path d="M.7 17V2A1.500 1.500 0 0 1 2.200.6H7L9 3H18a1.300 1.300 0 0 1 1.300 1.300V16A1.300 1.300 0 0 1 18 17.400H2Z" fill="#ffdc7c" stroke="#b98206" strokeWidth="1.200" />
                <path d="M.7 5V2A1.500 1.500 0 0 1 2.200.6H7L9 3 7 5Z" fill="#f4bd27" stroke="#b98206" strokeWidth="1" />
              </Svg>
              <FavLabel $ls={-0.3}>Other favorites</FavLabel>
            </Fav>
          </FavBar>

          <Page>
            <Banner />
            <Timetable>
              <Contents>
                <Row>{days.map((d) => <Cell as="th" key={d} $head $low $pad={4} $bg={PINK}>{d}</Cell>)}</Row>
                {slots.map(([time, ...cells], r) => (
                  <Row key={time}>
                    <Cell $low={r === 4} $pad={4.5} $bg={PINK}>{time}</Cell>
                    {cells.map(([label, span], i) => (
                      <Cell key={i} as={span ? "th" : "td"} $head={!!span} $low={r === 4} $span={span} $pad={4.3} $bg={GREEN}>{label}</Cell>
                    ))}
                  </Row>
                ))}
              </Contents>
            </Timetable>
            <Subjects>
              <Contents>
                <Row>{["S.NO.", "SUBJECT CODE", "SUBJECT NAME"].map((h) => <Cell as="th" key={h} $head $low $pad={9}>{h}</Cell>)}</Row>
                {subjects.map(([code, name], i) => (
                  <Row key={code}>
                    <Cell $low={i === 3} $pad={9}>{i + 1}</Cell>
                    <Cell $low={i === 3} $pad={9.4}>{code}</Cell>
                    <Cell $low={i === 3} $pad={9.2}>{name}</Cell>
                  </Row>
                ))}
              </Contents>
            </Subjects>
          </Page>
        </Left>

        <Sidebar>
          {SideIcons.map((icon, i) => <SideSlot key={i} $h={50}>{icon}</SideSlot>)}
          <HLine $mt={16} />
          <SideSlot $h={77}><Icon w={15} h={15} c="#c4c4c4" sw={1.4}><path d="M7.500 .5V14.500M.5 7.500H14.500" /></Icon></SideSlot>
          <Spacer />
          <HLine $mt={0} />
          <SideSlot $h={55}>
            <Icon w={22} h={22} sw={1.5}>
              <circle cx="11" cy="11" r="2.800" />
              <path d="M9.200 1H12.800L13.500 4.100 15.500 5.300 18.500 4.300 20.600 7.800 18.300 10V12L20.600 14.200 18.500 17.700 15.500 16.700 13.500 17.900 12.800 21H9.200L8.500 17.900 6.500 16.700 3.500 17.700 1.400 14.200 3.700 12V10L1.400 7.800 3.500 4.300 6.500 5.300 8.500 4.100Z" />
            </Icon>
          </SideSlot>
        </Sidebar>
      </Main>

      <Taskbar>
        <Weather>
          <Svg width="32" height="36" viewBox="0 0 32 36">
            <defs><linearGradient id="sun" x1="0" y1="0" x2=".6" y2="1"><stop offset="0" stopColor="#f2bd35" /><stop offset="1" stopColor="#f26b13" /></linearGradient></defs>
            <circle cx="12" cy="20" r="12" fill="url(#sun)" />
            <circle cx="21" cy="8.500" r="10" fill="#c42b1c" />
            <text x="21" y="13.500" fontSize="13.500" fill="#fff" textAnchor="middle" fontFamily="Open Sans, sans-serif">1</text>
          </Svg>
          <TwoLines $pl={5.5} $ls={0.05} $second="#5f6168"><span>34°C</span><span>Sunny</span></TwoLines>
        </Weather>
        <Svg width="29" height="29" viewBox="0 0 29 29">
          <defs><linearGradient id="win" x1="0" y1="0" x2="1" y2="1"><stop offset="0" stopColor="#45c8fb" /><stop offset="1" stopColor="#006fd1" /></linearGradient></defs>
          <path d="M1.500 0H14V14H0V1.500A1.500 1.500 0 0 1 1.500 0ZM15 0H27.500A1.500 1.500 0 0 1 29 1.500V14H15ZM0 15H14V29H1.500A1.500 1.500 0 0 1 0 27.500ZM15 15H29V27.500A1.500 1.500 0 0 1 27.500 29H15Z" fill="url(#win)" />
        </Svg>
        <SearchBox>
          <Icon w={18} h={18} c="#222" sw={2}><circle cx="7.700" cy="7.700" r="6.600" /><path d="M12.500 12.500 17 17.300" /></Icon>
          <SearchText>Search</SearchText>
          <Castle />
        </SearchBox>
        {TaskApps.map((a, i) => (
          <Slot key={i} $w={55}><App48 $active={a.active} $run={a.run}>{a.icon}</App48></Slot>
        ))}
        <Slot $w={40} $ml={72}><Icon w={14} h={8} c="#1b1b1b" sw={1.7}><path d="M1 7 7 1 13 7" /></Icon></Slot>
        <Slot $w={40}>
          <Icon w={20} h={20} c="#1b1b1b" sw={1.4}>
            <path d="M.8 9.500A9.200 9.200 0 0 1 18 5.500M18.500.8V5.700H13.500M9 19.200A9 9 0 0 1 1.600 14.500M1.200 19V14.300H6" />
            <circle cx="15" cy="15" r="5.200" fill="#ff9800" stroke="none" />
          </Icon>
        </Slot>
        <TwoLines $w={56} $align="center"><span>ENG</span><span>IN</span></TwoLines>
        <Slot $w={30} $ml={4}>
          <Icon w={20} h={16} c="#1b1b1b" sw={1.4}>
            <path d="M.8 6A13 13 0 0 1 19.200 6M3.500 8.800A9.200 9.200 0 0 1 16.500 8.800M6.200 11.600A5.300 5.300 0 0 1 13.800 11.600" />
            <circle cx="10" cy="14" r="1.700" fill="#1b1b1b" stroke="none" />
          </Icon>
        </Slot>
        <Slot $w={30}>
          <Icon w={20} h={16} c="#1b1b1b" sw={1.3}>
            <path d="M.8 5.500H4L8.500 1.500V14.500L4 10.500H.8ZM11.300 5.500A4 4 0 0 1 11.300 10.500M13.700 3.300A7 7 0 0 1 13.700 12.700M16.200 1.200A10 10 0 0 1 16.200 14.800" />
          </Icon>
        </Slot>
        <Slot $w={30}>
          <Icon w={20} h={12} c="#1b1b1b" sw={1.4}>
            <rect x=".7" y=".7" width="16" height="10.600" rx="2.500" />
            <rect x="3" y="3" width="9.500" height="6" rx=".8" fill="#1b1b1b" stroke="none" />
            <path d="M18.500 4.500V7.500" />
          </Icon>
        </Slot>
        <TwoLines $w={92} $align="right" $ls={0.35} $pb={1}><span>13:38</span><span>19-03-2024</span></TwoLines>
        <Slot $w={40}>
          <Svg width="16" height="19" viewBox="0 0 16 19"><path d="M8 0A6 6 0 0 1 14 6V11L16 14.500V15.500H0V14.500L2 11V6A6 6 0 0 1 8 0ZM5 16.700H11A3 2.300 0 0 1 5 16.700Z" fill="#0a4a9c" /></Svg>
        </Slot>
        <Slot $w={50}><TrayCopilot /></Slot>
      </Taskbar>
    </Desktop>
  );
}
